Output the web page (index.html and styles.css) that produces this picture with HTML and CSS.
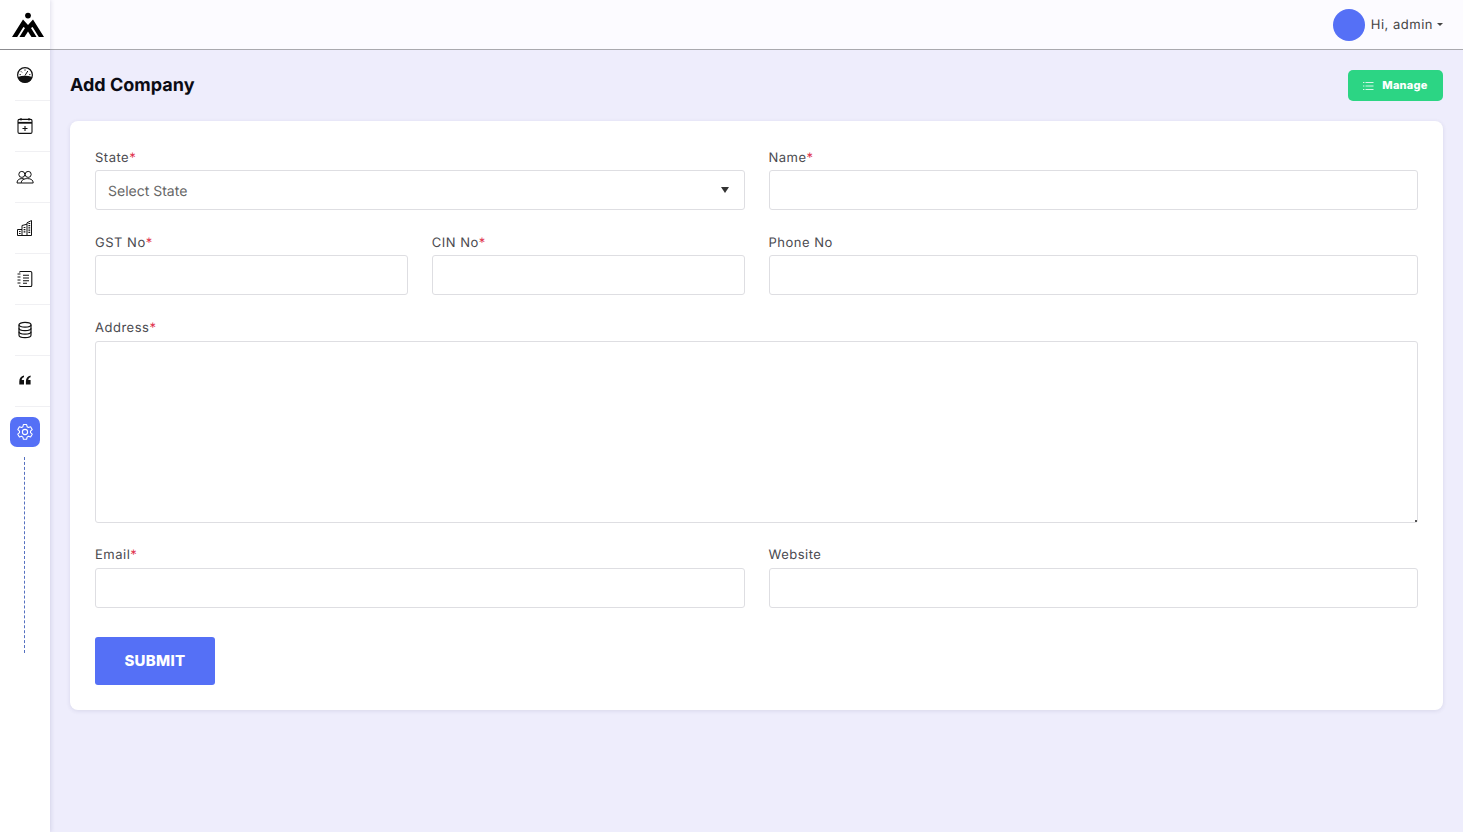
FILE: index.html
```html
<!DOCTYPE html>
<html lang="en">
<head>
<meta charset="utf-8">
<title>Add Company</title>
<link rel="stylesheet" href="styles.css">
</head>
<body>
<div class="app">
  <aside class="sidebar">
    <div class="logo">
      <svg width="32" height="26" viewBox="0 0 32 26"><circle cx="16" cy="3.6" r="2.9"/><path d="M0 25 L11 7.5 L16 13 L21 7.5 L32 25 Z"/><path d="M6 25.5 L12.2 15.5 M26 25.5 L19.8 15.5" fill="none" stroke="#fff" stroke-width="1.9"/><path d="M16 19.5 L12.2 25.5 H19.8 Z" fill="#fff"/></svg>
    </div>
    <nav class="nav">
      <a class="nav-item"><svg class="ic" viewBox="0 0 18 18"><circle cx="9" cy="9" r="7.4" fill="none" stroke="#111" stroke-width="1.2"/><path d="M1.8 11 a7.4 7.4 0 0 0 14.4 0 Q9 8.6 1.8 11Z" fill="#111"/><path d="M9 9.5 L11.8 5 M5 5.4 l1 1 M9 3.4 v1.3 M3.6 8.6 h1.2 M13.2 8.6 h1.2" stroke="#111" stroke-width="1" fill="none"/></svg></a>
      <a class="nav-item"><svg class="ic" viewBox="0 0 18 18" fill="none" stroke="#111" stroke-width="1.1"><rect x="2" y="2.4" width="14" height="14" rx="1.4"/><path d="M5 1v2.4M13 1v2.4"/><path d="M2 5.8h14" stroke-width="1.8"/><path d="M9 9v5M6.5 11.5h5"/></svg></a>
      <a class="nav-item"><svg class="ic" viewBox="0 0 18 18" fill="none" stroke="#111" stroke-width="1"><circle cx="5.8" cy="6.4" r="3"/><circle cx="12.2" cy="6.4" r="3"/><path d="M1 15 C1 11.8 3.3 10.6 5.8 10.6 C6.8 10.6 7.6 10.8 8.2 11 M5.2 15 C5.2 12 8 10.6 11.5 10.6 C15 10.6 17.2 12 17.2 15 Z M1 15 H5.2"/></svg></a>
      <a class="nav-item"><svg class="ic" viewBox="0 0 18 18" fill="none" stroke="#111" stroke-width="1"><path d="M1.5 16.5 V10.5 H6 V6.5 L11 5.2 V3.8 L15.5 1.5 V16.5 Z M6 10.5 V16.5 M11 5.2 V16.5"/><path d="M12.4 4.5h1.8M12.4 6.7h1.8M12.4 8.9h1.8M12.4 11.1h1.8M12.4 13.3h1.8M7.6 8.5h1.8M7.6 10.7h1.8M7.6 12.9h1.8M3 12.5h1.6M3 14.5h1.6" stroke-width="1.2"/></svg></a>
      <a class="nav-item"><svg class="ic" viewBox="0 0 18 18" fill="none" stroke="#111" stroke-width="1.1"><path d="M3.5 2.5 Q3.5 1.5 4.5 1.5 H14.5 Q15.8 1.5 15.8 2.8 V15.2 Q15.8 16.5 14.5 16.5 H4.5 Q3.5 16.5 3.5 15.5"/><path d="M1.5 4h3M1.5 7h3M1.5 10h3M1.5 13h3" stroke-width="1.2"/><path d="M7 5.2h6M7 8h6M7 10.8h6M7 13.2h4"/></svg></a>
      <a class="nav-item"><svg class="ic" viewBox="0 0 18 18" fill="none" stroke="#111" stroke-width="1.2"><ellipse cx="9" cy="3.8" rx="6" ry="2.4"/><path d="M3 3.8v10.4c0 1.3 2.7 2.4 6 2.4s6-1.1 6-2.4V3.8"/><path d="M3 7.3c0 1.3 2.7 2.4 6 2.4s6-1.1 6-2.4M3 10.8c0 1.3 2.7 2.4 6 2.4s6-1.1 6-2.4"/></svg></a>
      <a class="nav-item"><svg class="ic" viewBox="0 0 18 18" fill="#111"><path d="M8 3.5 C5 4 3.3 6 3.3 9.5 V12.5 H8 V8 H5.7 C5.8 6.6 6.6 5.5 8 5.2Z M14.6 3.5 C11.6 4 9.9 6 9.9 9.5 V12.5 H14.6 V8 H12.3 C12.4 6.6 13.2 5.5 14.6 5.2Z"/></svg></a>
      <a class="nav-item nav-item-last"><span class="gear-box"><svg class="ic" viewBox="0 0 18 18" fill="none" stroke="#fff" stroke-width="1.1"><path d="M7.4 1.5 h3.2 l.5 2.2 1.3.8 2.2-.7 1.6 2.8-1.7 1.5 v1.6 l1.7 1.5-1.6 2.8-2.2-.7-1.3.8-.5 2.2 H7.4 l-.5-2.2-1.3-.8-2.2.7-1.6-2.8 1.7-1.5 V8.1 L1.8 6.6 l1.6-2.8 2.2.7 1.3-.8Z" stroke-linejoin="round"/><circle cx="9" cy="9" r="2.6"/></svg></span></a>
      <div class="nav-line"></div>
    </nav>
  </aside>
  <div class="main">
    <header class="topbar">
      <span class="avatar"></span>
      <span class="user">Hi, admin</span>
      <span class="caret"></span>
    </header>
    <div class="content">
      <div class="page-head">
        <h1 class="page-title">Add Company</h1>
        <a class="manage"><svg width="12" height="12" viewBox="0 0 12 12" fill="none" stroke="#d8f7e8" stroke-width="1"><path d="M1 2.5h1.4M3.5 2.5H11.5M1 6h1.4M3.5 6H11.5M1 9.5h1.4M3.5 9.5H11.5"/></svg><span class="manage-text">Manage</span></a>
      </div>
      <form class="card">
        <div class="grid">
          <div class="field half">
            <label class="label">State<span class="req">*</span></label>
            <div class="select"><span>Select State</span><span class="select-arrow"></span></div>
          </div>
          <div class="field half">
            <label class="label">Name<span class="req">*</span></label>
            <input class="input" type="text">
          </div>
          <div class="field quarter">
            <label class="label">GST No<span class="req">*</span></label>
            <input class="input" type="text">
          </div>
          <div class="field quarter">
            <label class="label">CIN No<span class="req">*</span></label>
            <input class="input" type="text">
          </div>
          <div class="field half">
            <label class="label">Phone No</label>
            <input class="input" type="text">
          </div>
          <div class="field full">
            <label class="label label-tall">Address<span class="req">*</span></label>
            <textarea class="textarea"></textarea>
            <span class="grip"></span>
          </div>
          <div class="field half">
            <label class="label label-tall">Email<span class="req">*</span></label>
            <input class="input" type="text">
          </div>
          <div class="field half">
            <label class="label label-tall">Website</label>
            <input class="input" type="text">
          </div>
        </div>
        <button class="submit" type="button">SUBMIT</button>
      </form>
    </div>
  </div>
</div>
</body>
</html>
```
FILE: styles.css
```css
* { box-sizing: border-box; }
html, body { margin: 0; height: 100%; }
body { font-family: Inter, "Liberation Sans", sans-serif; background: #eeedfc; color: #444; overflow: hidden; text-rendering: geometricPrecision; }
.app { display: flex; height: 832px; }
.sidebar { width: 50px; flex: none; background: #fff; box-shadow: 1px 0 4px rgba(60,60,110,.14); z-index: 2; display: flex; flex-direction: column; }
.logo { height: 50px; border-bottom: 1px solid #8b8b8f; display: flex; align-items: flex-start; justify-content: center; padding-top: 12px; padding-left: 6px; flex: none; }
.nav { display: flex; flex-direction: column; }
.nav-item { height: 51px; display: flex; align-items: center; justify-content: center; border-bottom: 1px solid #f0f0f3; margin-left: 15px; padding-right: 15px; }
.nav-item-last { border-bottom: 0; height: 50px; }
.ic { width: 18px; height: 18px; display: block; flex: none; }
.gear-box { width: 30px; height: 30px; background: #5570f6; border-radius: 7px; display: flex; align-items: center; justify-content: center; flex: none; }
.nav-line { margin-left: 24px; width: 0; height: 196px; border-left: 1px dashed #5570c0; }
.main { flex: 1; min-width: 0; display: flex; flex-direction: column; }
.topbar { height: 50px; background: #fcfbff; border-bottom: 1px solid #a9a9ae; display: flex; align-items: center; justify-content: flex-end; padding-right: 20px; flex: none; }
.avatar { width: 32px; height: 32px; border-radius: 50%; background: #5570f6; margin-right: 6px; }
.user { font-size: 13px; letter-spacing: .5px; color: #444; }
.caret { width: 0; height: 0; border: 3px solid transparent; border-top-color: #444; border-bottom: 0; margin-left: 4px; }
.content { padding: 20px 20px 0; }
.page-head { display: flex; align-items: center; justify-content: space-between; height: 31px; margin-bottom: 20px; }
.page-title { margin: 0; font-size: 18px; font-weight: 700; color: #0c0c14; }
.manage { width: 95px; height: 31px; background: #2cd584; color: #fff; border-radius: 5px; font-size: 11px; font-weight: 800; display: flex; align-items: center; justify-content: center; gap: 8px; padding-right: 1px; }
.manage-text { padding-bottom: 1px; letter-spacing: .25px; }
.card { background: #fff; border-radius: 8px; box-shadow: 0 1px 4px rgba(60,60,110,.12); padding: 25px; height: 589px; }
.grid { display: grid; grid-template-columns: repeat(4, 1fr); column-gap: 24px; row-gap: 20px; }
.half { grid-column: span 2; }
.quarter { grid-column: span 1; }
.full { grid-column: span 4; }
.field { display: flex; flex-direction: column; min-width: 0; position: relative; }
.label { display: block; font-size: 13px; line-height: 20px; height: 24px; padding-top: 2px; letter-spacing: .5px; color: #4a4a4f; }
.label-tall { height: 25px; }
.req { color: #e0314c; }
.input, .select, .textarea { width: 100%; border: 1px solid #dedee2; border-radius: 3px; background: #fff; display: block; font: inherit; }
.input, .select { height: 40px; margin-bottom: 1px; }
.select { display: flex; align-items: center; justify-content: space-between; padding: 3px 15px 0 12px; font-size: 14px; color: #666; }
.select-arrow { width: 0; height: 0; border: 4.5px solid transparent; border-top: 6px solid #333; border-bottom: 0; margin-top: -3px; }
.textarea { height: 182px; resize: none; }
.grip { position: absolute; right: 1px; bottom: 1px; width: 2px; height: 2px; background: #555; }
.submit { display: block; margin-top: 28px; width: 120px; height: 48px; padding: 0 0 2px; background: #5570f6; color: #fff; border: 0; border-radius: 3px; font: 800 15px Inter, "Liberation Sans", sans-serif; letter-spacing: .3px; }
```
